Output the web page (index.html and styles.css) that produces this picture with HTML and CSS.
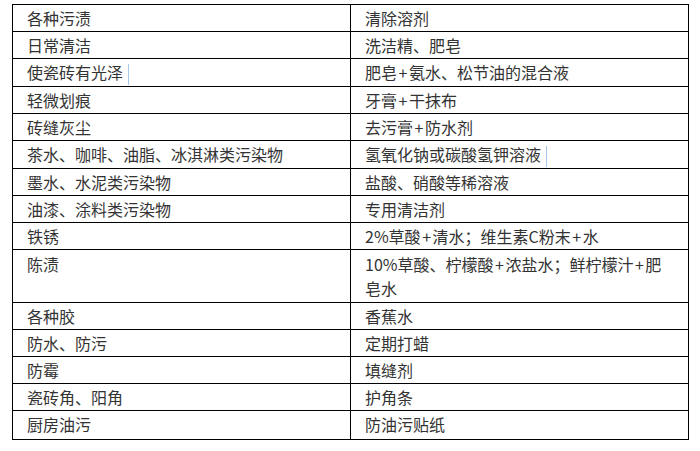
FILE: index.html
```html
<!DOCTYPE html>
<html lang="zh-CN">
<head>
<meta charset="utf-8">
<title>瓷砖污渍清洁方法</title>
<link rel="stylesheet" href="styles.css">
</head>
<body>
<table class="stain-table">
  <colgroup><col class="col"><col class="col"></colgroup>
  <tbody>
    <tr><td>各种污渍</td><td>清除溶剂</td></tr>
    <tr><td>日常清洁</td><td>洗洁精、肥皂</td></tr>
    <tr><td>使瓷砖有光泽<span class="caret"></span></td><td>肥皂<span class="plus">+</span>氨水、松节油的混合液</td></tr>
    <tr><td>轻微划痕</td><td>牙膏<span class="plus">+</span>干抹布</td></tr>
    <tr><td>砖缝灰尘</td><td>去污膏<span class="plus">+</span>防水剂</td></tr>
    <tr><td>茶水、咖啡、油脂、冰淇淋类污染物</td><td>氢氧化钠或碳酸氢钾溶液<span class="caret"></span></td></tr>
    <tr><td>墨水、水泥类污染物</td><td>盐酸、硝酸等稀溶液</td></tr>
    <tr><td>油漆、涂料类污染物</td><td>专用清洁剂</td></tr>
    <tr><td>铁锈</td><td>2%草酸<span class="plus">+</span>清水；维生素C粉末<span class="plus">+</span>水</td></tr>
    <tr class="tall"><td>陈渍</td><td>10%草酸、柠檬酸<span class="plus">+</span>浓盐水；鲜柠檬汁<span class="plus">+</span>肥<br>皂水</td></tr>
    <tr><td>各种胶</td><td>香蕉水</td></tr>
    <tr><td>防水、防污</td><td>定期打蜡</td></tr>
    <tr><td>防霉</td><td>填缝剂</td></tr>
    <tr><td>瓷砖角、阳角</td><td>护角条</td></tr>
    <tr class="last"><td>厨房油污</td><td>防油污贴纸</td></tr>
  </tbody>
</table>
</body>
</html>
```
FILE: styles.css
```css
html, body {
  margin: 0;
  padding: 0;
  background: #ffffff;
}

body {
  padding: 4px 0 0 12px;
  font-family: "Noto Sans CJK SC", "Noto Sans", sans-serif;
  font-size: 16px;
  color: #333333;
}

.stain-table {
  width: 677px;
  table-layout: fixed;
  border-collapse: collapse;
}

.stain-table .col {
  width: 50%;
}

.stain-table td {
  border: 1px solid #000000;
  padding: 1px 14px;
  line-height: 24px;
  vertical-align: top;
  text-align: left;
}

.stain-table tr.tall td {
  padding-top: 2px;
  padding-bottom: 2px;
}

.stain-table tr.last td {
  padding-bottom: 3px;
}

.plus {
  margin: 0 1.5px;
}

.caret {
  display: inline-block;
  width: 0;
  height: 21px;
  margin-left: 5px;
  border-left: 1px solid #a9c6ee;
  vertical-align: middle;
}
```
